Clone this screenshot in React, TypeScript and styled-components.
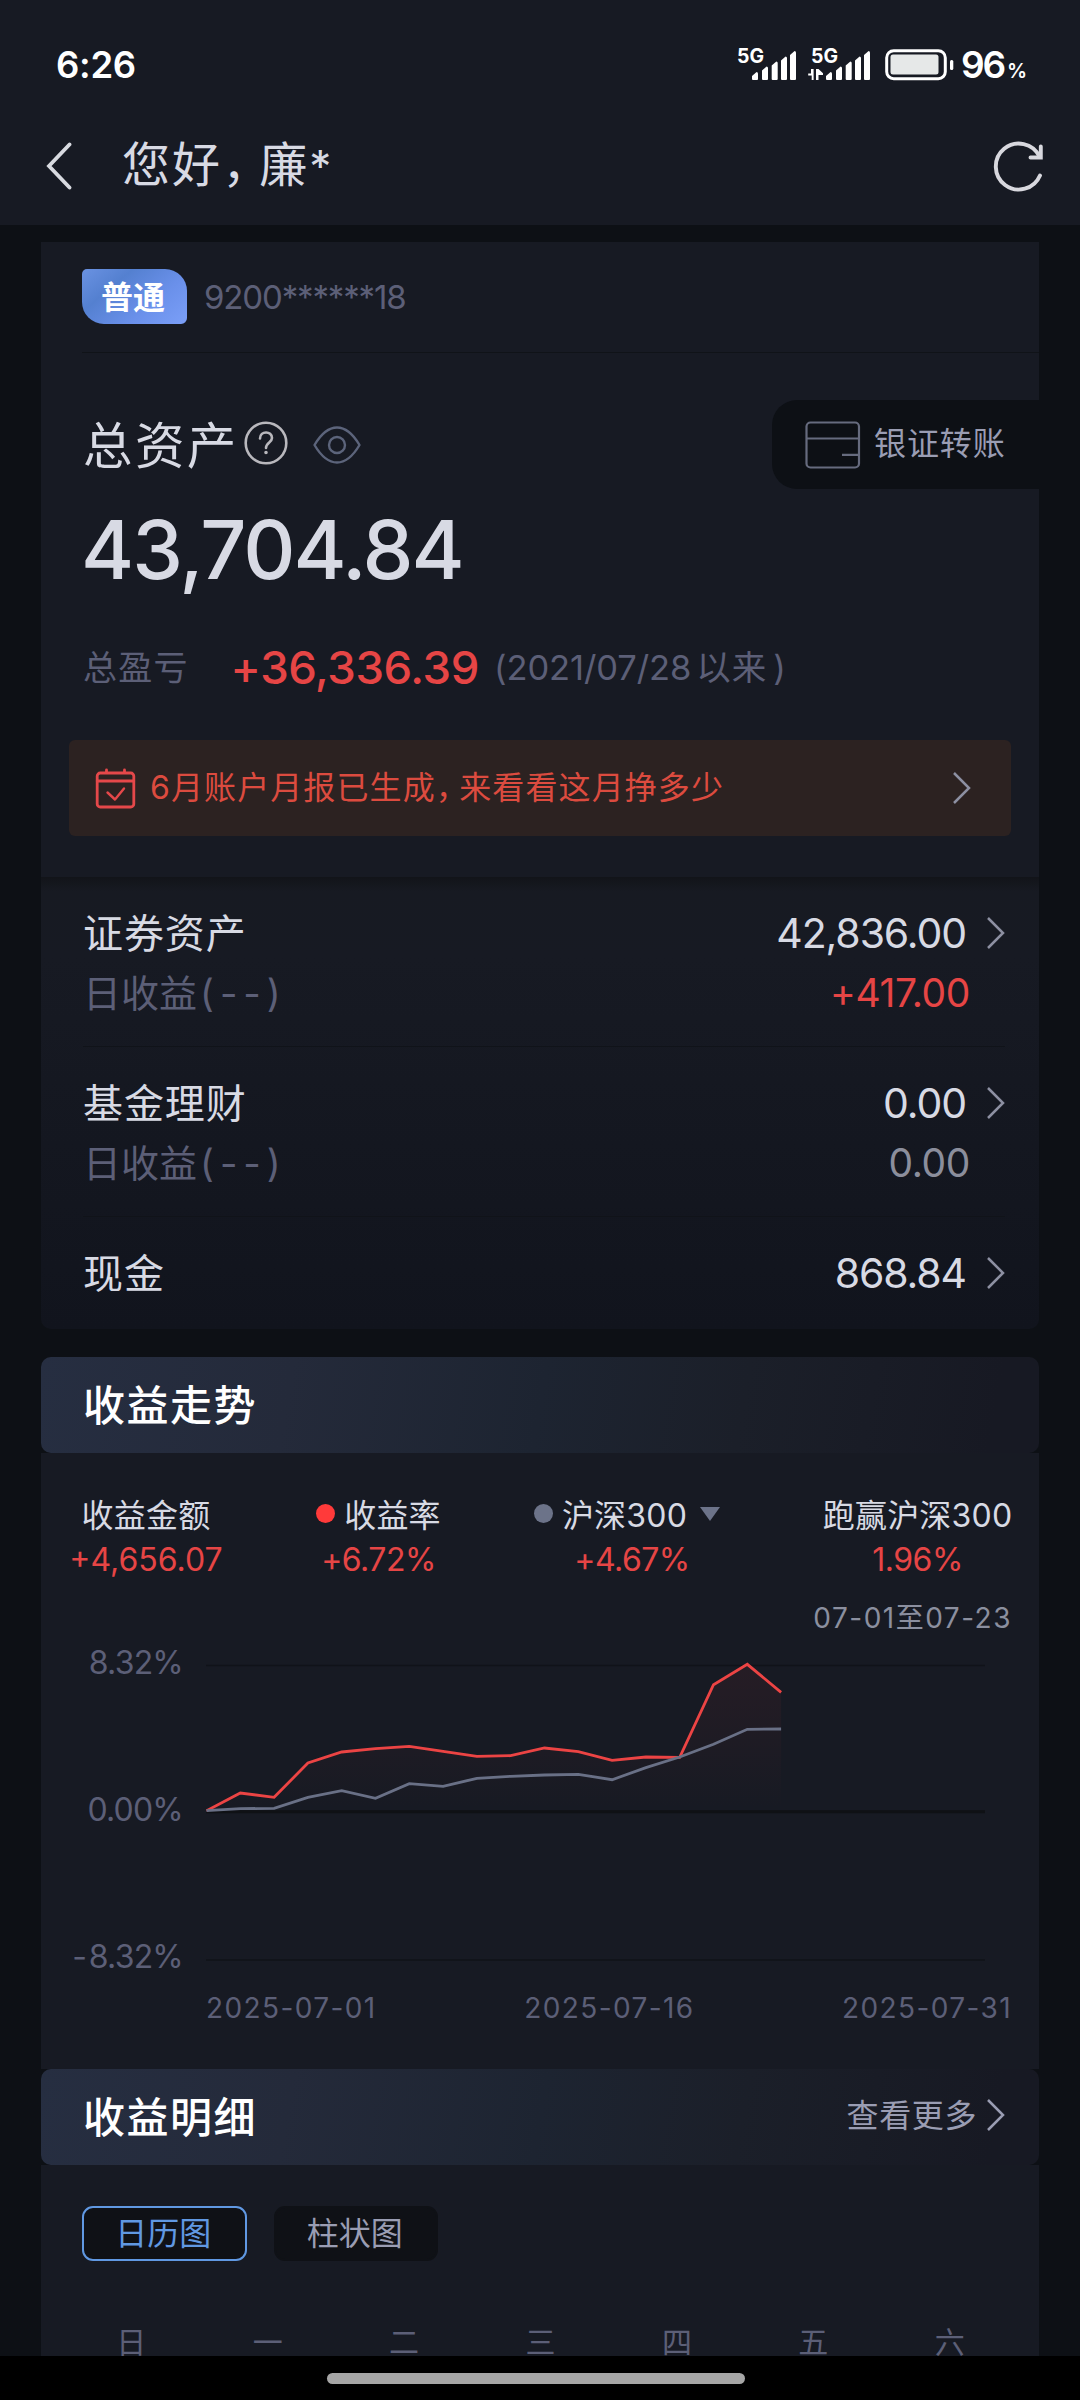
import React from 'react';
import styled, { createGlobalStyle } from 'styled-components';

const c = {
  page: '#0d1015',
  card: '#171a23',
  text: '#d8dae4',
  soft: '#9a9db3',
  dim: '#5c5f77',
  red: '#e64545',
  line: '#101318',
};

const Global = createGlobalStyle`
  html, body { margin: 0; padding: 0; background: ${c.page}; }
  * { box-sizing: border-box; }
  body { font-family: Inter, "Noto Sans CJK SC", sans-serif; }
`;

const Screen = styled.div`
  width: 1080px;
  height: 2400px;
  display: flex;
  flex-direction: column;
  overflow: hidden;
  background: ${c.page};
  color: ${c.text};
  white-space: nowrap;
`;

/* ---------- status bar and title bar ---------- */
const StatusBar = styled.div`
  height: 106px;
  flex: none;
  padding: 24px 0 0 56px;
  background: ${c.card};
  color: #fff;
  display: flex;
  align-items: center;
`;
const Clock = styled.span`
  font-size: 36.5px;
  font-weight: 600;
  letter-spacing: -0.3px;
  line-height: 44px;
  width: 681px;
`;
const Percent = styled.span`
  display: flex;
  align-items: baseline;
  font-size: 37px;
  font-weight: 600;
  line-height: 44px;
  letter-spacing: -2.2px;
  margin-left: 7px;
  small {
    font-size: 20px;
    line-height: 24px;
    margin-left: 3px;
  }
`;
const Signal = styled.svg<{ $gap: number }>`
  display: block;
  flex: none;
  margin-right: ${(p) => p.$gap}px;
`;
const TitleBar = styled.div`
  height: 119px;
  flex: none;
  padding: 0 35px 0 45px;
  background: ${c.card};
  display: flex;
  align-items: center;
`;
const Greeting = styled.h1`
  margin: 0 0 0 49px;
  flex: 1;
  font-size: 48px;
  font-weight: 400;
  line-height: 60px;
  letter-spacing: 2.1px;
`;
const Comma = styled.span<{ $by: number }>`
  letter-spacing: -${(p) => p.$by}px;
`;
const Star = styled.span`
  font-size: 44px;
`;

/* ---------- scroll area ---------- */
const Content = styled.main`
  flex: 1;
  min-height: 0;
  overflow: hidden;
  padding: 17px 41px 0;
`;
const Card = styled.section`
  background: ${c.card};
`;
const AccountRow = styled.div`
  height: 111px;
  margin-left: 41px;
  padding-top: 27px;
  border-bottom: 1px solid ${c.line};
  display: flex;
  align-items: flex-start;
`;
const Badge = styled.span`
  width: 105px;
  height: 55px;
  padding-right: 3px;
  border-radius: 5px 22px 6px 22px;
  background: linear-gradient(140deg, #6a92e2 0%, #5480d0 30%, #6a90ea 65%, #7b9ff8 100%);
  color: #fff;
  font-size: 32px;
  font-weight: 700;
  line-height: 57px;
  text-align: center;
`;
const AccountNo = styled.span`
  margin-left: 17px;
  color: ${c.dim};
  font-size: 33px;
  line-height: 56px;
  letter-spacing: -1.15px;
`;

const Summary = styled.div`
  height: 524px;
  padding: 47px 0 0 42px;
`;
const SummaryTop = styled.div`
  height: 89px;
  display: flex;
  align-items: center;
`;
const SummaryTitle = styled.h2`
  margin: 0 5px 0 0;
  font-size: 49.5px;
  font-weight: 400;
  line-height: 60px;
  letter-spacing: 2.4px;
  padding-top: 2px;
`;
const EyeSlot = styled.span`
  margin-left: 25px;
  flex: 1;
  display: flex;
`;
const Transfer = styled.div`
  width: 267px;
  height: 89px;
  padding-left: 33px;
  border-radius: 25px 0 0 25px;
  background: ${c.page};
  color: ${c.soft};
  display: flex;
  align-items: center;
  gap: 13px;
  font-size: 32px;
  letter-spacing: 0.9px;
`;
const TransferText = styled.span`
  line-height: 40px;
  margin-bottom: 2px;
`;
const Total = styled.div`
  margin: 16px 0 0 -2px;
  font-size: 81px;
  font-weight: 500;
  line-height: 90px;
  letter-spacing: -2px;
`;
const ProfitRow = styled.div`
  margin-top: 48px;
  height: 50px;
  display: flex;
  align-items: center;
  color: ${c.dim};
  font-size: 34px;
  line-height: 50px;
  letter-spacing: 1.2px;
`;
const Profit = styled.span`
  margin-left: 42px;
  color: ${c.red};
  font-size: 45.5px;
  font-weight: 500;
  letter-spacing: -0.4px;
`;
const Since = styled.span`
  margin-left: 15px;
  font-size: 34.5px;
  letter-spacing: -0.1px;
  display: flex;
`;
const SinceUnit = styled.span`
  margin: 0 6px 0 5px;
  letter-spacing: 1px;
`;
const Banner = styled.div`
  margin: 47px 28px 0 -14px;
  height: 96px;
  padding: 0 40px 0 26px;
  border-radius: 6px;
  background: #2c2221;
  color: #dc4b3f;
  display: flex;
  align-items: center;
  font-size: 32px;
  letter-spacing: 1.1px;
`;
const BannerText = styled.span`
  margin: 0 0 1px 14px;
  line-height: 40px;
  flex: 1;
`;

const Holdings = styled.section`
  border-radius: 0 0 10px 10px;
  padding: 0 34px 0 42px;
  background: linear-gradient(180deg, #121419 0, #171a22 14px, #171a23 80px, #11141d 100%);
`;
const Holding = styled.div<{ $last?: boolean }>`
  height: ${(p) => (p.$last ? 112 : 170)}px;
  padding-top: 36px;
  border-bottom: ${(p) => (p.$last ? 'none' : '1px solid #101319')};
  display: flex;
  flex-direction: column;
  gap: 20px;
`;
const HoldingLine = styled.div`
  height: 40px;
  display: flex;
  align-items: center;
`;
const HoldingName = styled.span`
  flex: 1;
  font-size: 40px;
  letter-spacing: 0.9px;
  line-height: 40px;
  padding-top: 2px;
`;
const HoldingValue = styled.span`
  font-size: 41px;
  letter-spacing: -1.1px;
  line-height: 40px;
  margin-right: 21px;
`;
const DayLabel = styled.span`
  flex: 1;
  color: ${c.dim};
  font-size: 38px;
  line-height: 40px;
  span { letter-spacing: 6px; margin-left: 3px; }
`;
const DayValue = styled.span<{ $up?: boolean }>`
  color: ${(p) => (p.$up ? c.red : '#8b8e9c')};
  font-size: 39px;
  letter-spacing: -0.4px;
  line-height: 40px;
  margin-right: 35px;
`;

/* ---------- section headers ---------- */
const SectionHead = styled.header<{ $top?: number }>`
  height: 96px;
  margin-top: ${(p) => p.$top || 0}px;
  padding: 0 34px 0 42px;
  border-radius: 10px;
  background: linear-gradient(100deg, #262e41 0%, #242a3a 25%, #1d2431 50%, #1b1f29 70%, #171923 95%);
  display: flex;
  align-items: center;
`;
const SectionTitle = styled.h2`
  margin: 2px 0 0;
  flex: 1;
  color: #fff;
  font-size: 42px;
  font-weight: 500;
  line-height: 60px;
  letter-spacing: 1.5px;
`;
const More = styled.span`
  display: flex;
  align-items: center;
  color: ${c.soft};
  font-size: 32px;
  line-height: 40px;
  letter-spacing: 0.6px;
  gap: 10px;
  margin-bottom: 4px;
`;
const MoreText = styled.span`
  padding-top: 1px;
`;

/* ---------- trend panel ---------- */
const Trend = styled.section`
  height: 616px;
  padding: 43px 28px 0 29px;
  background: ${c.card};
`;
const Stats = styled.div`
  display: flex;
  height: 82px;
`;
const Stat = styled.div<{ $w: number; $after: number }>`
  width: ${(p) => p.$w}px;
  margin-right: ${(p) => p.$after}px;
  display: flex;
  flex-direction: column;
  align-items: center;
  gap: 5px;
`;
const StatLabel = styled.div`
  height: 40px;
  display: flex;
  align-items: center;
  font-size: 32px;
  line-height: 40px;
  letter-spacing: 0.2px;
`;
const Dot = styled.i<{ $color: string }>`
  width: 19px;
  height: 19px;
  margin: 0 9px 5px 0;
  border-radius: 50%;
  background: ${(p) => p.$color};
`;
const Caret = styled.i`
  margin: 0 0 4px 13px;
  border: 10px solid transparent;
  border-top: 14px solid #6c7389;
  border-bottom: 0;
`;
const StatValue = styled.div<{ $shift?: number; $wide?: boolean }>`
  color: ${c.red};
  font-size: 32px;
  line-height: 38px;
  letter-spacing: ${(p) => (p.$wide ? 0 : -0.5)}px;
  padding-left: ${(p) => p.$shift || 0}px;
`;
const Range = styled.div`
  margin: 22px -1px 0 0;
  height: 36px;
  line-height: 36px;
  text-align: right;
  color: #8b8f9f;
  font-size: 28px;
  letter-spacing: 1.5px;
`;
const ChartRow = styled.div`
  margin-top: 6px;
  height: 336px;
  display: flex;
`;
const Axis = styled.div`
  width: 113px;
  display: flex;
  flex-direction: column;
  justify-content: space-between;
  align-items: flex-end;
  color: ${c.dim};
  font-size: 32px;
  line-height: 42px;
  letter-spacing: -0.8px;
`;
const Sign = styled.span`
  letter-spacing: 2px;
`;
const Plot = styled.svg`
  margin-left: 23px;
  display: block;
`;
const Dates = styled.div`
  margin: 12px -1px 0 136px;
  display: flex;
  justify-content: space-between;
  color: ${c.dim};
  font-size: 28px;
  line-height: 36px;
  letter-spacing: 1.4px;
`;

/* ---------- detail panel ---------- */
const Detail = styled.section`
  height: 240px;
  padding: 41px 21px 0 22px;
  background: ${c.card};
`;
const Tabs = styled.div`
  display: flex;
  gap: 27px;
  margin-left: 19px;
`;
const Tab = styled.button<{ $active?: boolean }>`
  width: 164.5px;
  height: 55px;
  padding: 0 2px 0 0;
  border: 2px solid ${(p) => (p.$active ? '#6098e2' : '#0f1116')};
  border-radius: 11px;
  background: #0f1116;
  color: ${(p) => (p.$active ? '#6098e2' : c.soft)};
  font: 400 32px/50px Inter, "Noto Sans CJK SC", sans-serif;
`;
const Week = styled.div`
  margin-top: 61px;
  display: grid;
  grid-template-columns: repeat(7, 1fr);
  text-align: center;
  color: ${c.dim};
  font-size: 30px;
  line-height: 40px;
`;

const NavBar = styled.footer`
  height: 44px;
  flex: none;
  padding-top: 17px;
  background: #000;
  display: flex;
  justify-content: center;
`;
const Pill = styled.div`
  width: 418px;
  height: 11px;
  margin-right: 8px;
  border-radius: 6px;
  background: #a6a6a6;
`;

/* ---------- drawings ---------- */
const bars = [
  [15, 24],
  [25, 18.5],
  [34.7, 13.5],
  [44, 8.5],
  [53, 3],
];
const SignalIcon = ({ data, gap }: { data?: boolean; gap: number }) => (
  <Signal $gap={gap} width={data ? 63 : 60} height="50" viewBox={data ? '-3 -8 63 50' : '0 -8 60 50'} fill="#fff">
    <text x="0" y="14.6" fontSize="20" fontWeight="700" fontFamily="Inter, sans-serif" textLength="27" lengthAdjust="spacingAndGlyphs">5G</text>
    {bars.map(([x, y]) => (
      <path key={x} d={`M${x} ${y + 4}L${x + 4.6} ${y}Q${x + 6} ${y} ${x + 6} ${y + 1.5}V31Q${x + 6} 32 ${x + 5} 32H${x + 1}Q${x} 32 ${x} 31Z`} />
    ))}
    {data && <path d="M2.6 21v11h-1.900v-4.600h-3.500v-1.800h2.800V21zM5 21v11h2.500v-5h4.500v-1.800L7.500 21z" />}
  </Signal>
);

const BatteryIcon = () => (
  <svg width="69" height="32" viewBox="0 0 69 32">
    <rect x="1.700" y="1.700" width="58.600" height="28" rx="7" fill="none" stroke="#fff" strokeWidth="3" />
    <rect x="5.500" y="5.500" width="48" height="20" rx="2.500" fill="#e6e8e8" />
    <rect x="65" y="11" width="3.300" height="10" rx="1.500" fill="#fff" />
  </svg>
);

const Chevron = ({ color = '#8d90a2' }: { color?: string }) => (
  <svg width="18" height="32" viewBox="0 0 18 32" fill="none" stroke={color} strokeWidth="2.500">
    <path d="M1 1L16 16L1 31" />
  </svg>
);

const red = [512, 459, 472, 369, 336, 326, 319, 334, 349, 347, 324, 335, 361, 351, 352, 134, 73, 157];
const grey = [512, 506, 505, 472, 452, 475, 431, 439, 415, 409, 405, 403, 419, 383, 351, 313, 268, 267];
const toPoints = (list: number[]) => list.map((v, i) => `${(0.5 + i * 33.8).toFixed(1)},${(v / 3 - 2).toFixed(1)}`).join(' ');

const Chart = () => (
  <Plot width="780" height="336" viewBox="0 0 780 336" fill="none">
    <defs>
      <linearGradient id="fade" x1="0" y1="0" x2="0" y2="1">
        <stop offset="0" stopColor="#ff4040" stopOpacity="0.065" />
        <stop offset="1" stopColor="#ff4040" stopOpacity="0" />
      </linearGradient>
    </defs>
    <path d="M0 23.500H779M0 318H779" stroke="#101319" strokeWidth="1.500" />
    <path d="M0 169.700H779" stroke="#0f1115" strokeWidth="3" />
    <polygon points={`0.5,168 ${toPoints(red)} 575.1,168`} fill="url(#fade)" />
    <polyline points={toPoints(red)} stroke="#ec4444" strokeWidth="2.800" />
    <polyline points={toPoints(grey)} stroke="#697086" strokeWidth="2.800" />
  </Plot>
);

export default function App() {
  return (
    <Screen>
      <Global />
      <StatusBar>
        <Clock>6:26</Clock>
        <SignalIcon gap={11} />
        <SignalIcon data gap={14} />
        <BatteryIcon />
        <Percent>96<small>%</small></Percent>
      </StatusBar>
      <TitleBar>
        <svg width="28" height="48" viewBox="0 0 28 48" fill="none" stroke="#d8dae0" strokeWidth="3.800" strokeLinecap="round">
          <path d="M24.500 2.500L4 24L24.500 45.500" />
        </svg>
        <Greeting>您好<Comma $by={11}>，</Comma>廉<Star>*</Star></Greeting>
        <svg width="52" height="52" viewBox="0 0 52 52" fill="none" stroke="#d8d8de" strokeWidth="3.900" strokeLinecap="round" strokeLinejoin="round">
          <path d="M47 35.500A23 23 0 1 1 46.500 16.500" />
          <path d="M47.800 6.500V17.500H37.500" strokeLinejoin="miter" />
        </svg>
      </TitleBar>

      <Content>
        <Card>
          <AccountRow>
            <Badge>普通</Badge>
            <AccountNo>9200******18</AccountNo>
          </AccountRow>
          <Summary>
            <SummaryTop>
              <SummaryTitle>总资产</SummaryTitle>
              <svg width="44" height="50" viewBox="0 0 44 50" fill="none" stroke="#b9b8bd" strokeWidth="2.600" strokeLinecap="round">
                <circle cx="22" cy="23" r="20.300" />
                <path d="M16 18.500C16 10.500 28 10.500 28 18C28 22.500 22 22.500 22 28" />
                <circle cx="22" cy="32.500" r="1" fill="#b9b8bd" strokeWidth="1.600" />
              </svg>
              <EyeSlot>
                <svg width="48" height="40" viewBox="0 0 48 40" fill="none" stroke="#5c647b" strokeWidth="2.400" strokeLinejoin="round">
                  <path d="M1.500 20C8 9 16 2.500 24 2.500S40 9 46.500 20C40 31 32 37.500 24 37.500S8 31 1.500 20Z" />
                  <circle cx="24" cy="20" r="8" />
                </svg>
              </EyeSlot>
              <Transfer>
                <svg width="56" height="48" viewBox="0 0 56 48" fill="none" stroke="#666b7e" strokeWidth="2.200">
                  <rect x="1.500" y="1.500" width="52.500" height="45" rx="4" />
                  <path d="M1.500 17.500H54M37 33.800H54" />
                </svg>
                <TransferText>银证转账</TransferText>
              </Transfer>
            </SummaryTop>
            <Total>43,704.84</Total>
            <ProfitRow>
              总盈亏
              <Profit>+36,336.39</Profit>
              <Since>(2021/07/28<SinceUnit>以来</SinceUnit>)</Since>
            </ProfitRow>
            <Banner>
              <svg width="41" height="42" viewBox="0 0 41 42" fill="none" stroke="#e5484a" strokeWidth="2.800" strokeLinecap="round" strokeLinejoin="round">
                <rect x="2.200" y="6" width="36.600" height="34" rx="3" />
                <path d="M2.200 14H38.800M11.500 3V5.500M29.500 3V5.500" />
                <path d="M12.500 25.500L20 32.500L29 21.500" strokeWidth="2.400" />
              </svg>
              <BannerText>6月账户月报已生成<Comma $by={8.5}>，</Comma>来看看这月挣多少</BannerText>
              <Chevron />
            </Banner>
          </Summary>
        </Card>

        <Holdings>
          <Holding>
            <HoldingLine>
              <HoldingName>证券资产</HoldingName>
              <HoldingValue>42,836.00</HoldingValue>
              <Chevron />
            </HoldingLine>
            <HoldingLine>
              <DayLabel>日收益<span>(--)</span></DayLabel>
              <DayValue $up>+417.00</DayValue>
            </HoldingLine>
          </Holding>
          <Holding>
            <HoldingLine>
              <HoldingName>基金理财</HoldingName>
              <HoldingValue>0.00</HoldingValue>
              <Chevron />
            </HoldingLine>
            <HoldingLine>
              <DayLabel>日收益<span>(--)</span></DayLabel>
              <DayValue>0.00</DayValue>
            </HoldingLine>
          </Holding>
          <Holding $last>
            <HoldingLine>
              <HoldingName>现金</HoldingName>
              <HoldingValue>868.84</HoldingValue>
              <Chevron />
            </HoldingLine>
          </Holding>
        </Holdings>

        <SectionHead $top={28}>
          <SectionTitle>收益走势</SectionTitle>
        </SectionHead>
        <Trend>
          <Stats>
            <Stat $w={152} $after={94}>
              <StatLabel>收益金额</StatLabel>
              <StatValue $wide>+4,656.07</StatValue>
            </Stat>
            <Stat $w={125} $after={94}>
              <StatLabel><Dot $color="#ff3a3a" />收益率</StatLabel>
              <StatValue>+6.72%</StatValue>
            </Stat>
            <Stat $w={184} $after={105}>
              <StatLabel><Dot $color="#6c7389" />沪深300<Caret /></StatLabel>
              <StatValue $shift={10}>+4.67%</StatValue>
            </Stat>
            <Stat $w={187} $after={0}>
              <StatLabel>跑赢沪深300</StatLabel>
              <StatValue>1.96%</StatValue>
            </Stat>
          </Stats>
          <Range>07-01至07-23</Range>
          <ChartRow>
            <Axis>
              <span>8.32%</span>
              <span>0.00%</span>
              <span><Sign>-</Sign>8.32%</span>
            </Axis>
            <Chart />
          </ChartRow>
          <Dates>
            <span>2025-07-01</span>
            <span>2025-07-16</span>
            <span>2025-07-31</span>
          </Dates>
        </Trend>

        <SectionHead>
          <SectionTitle>收益明细</SectionTitle>
          <More><MoreText>查看更多</MoreText><Chevron color={c.soft} /></More>
        </SectionHead>
        <Detail>
          <Tabs>
            <Tab $active>日历图</Tab>
            <Tab>柱状图</Tab>
          </Tabs>
          <Week>
            {['日', '一', '二', '三', '四', '五', '六'].map((d) => (
              <span key={d}>{d}</span>
            ))}
          </Week>
        </Detail>
      </Content>

      <NavBar>
        <Pill />
      </NavBar>
    </Screen>
  );
}
